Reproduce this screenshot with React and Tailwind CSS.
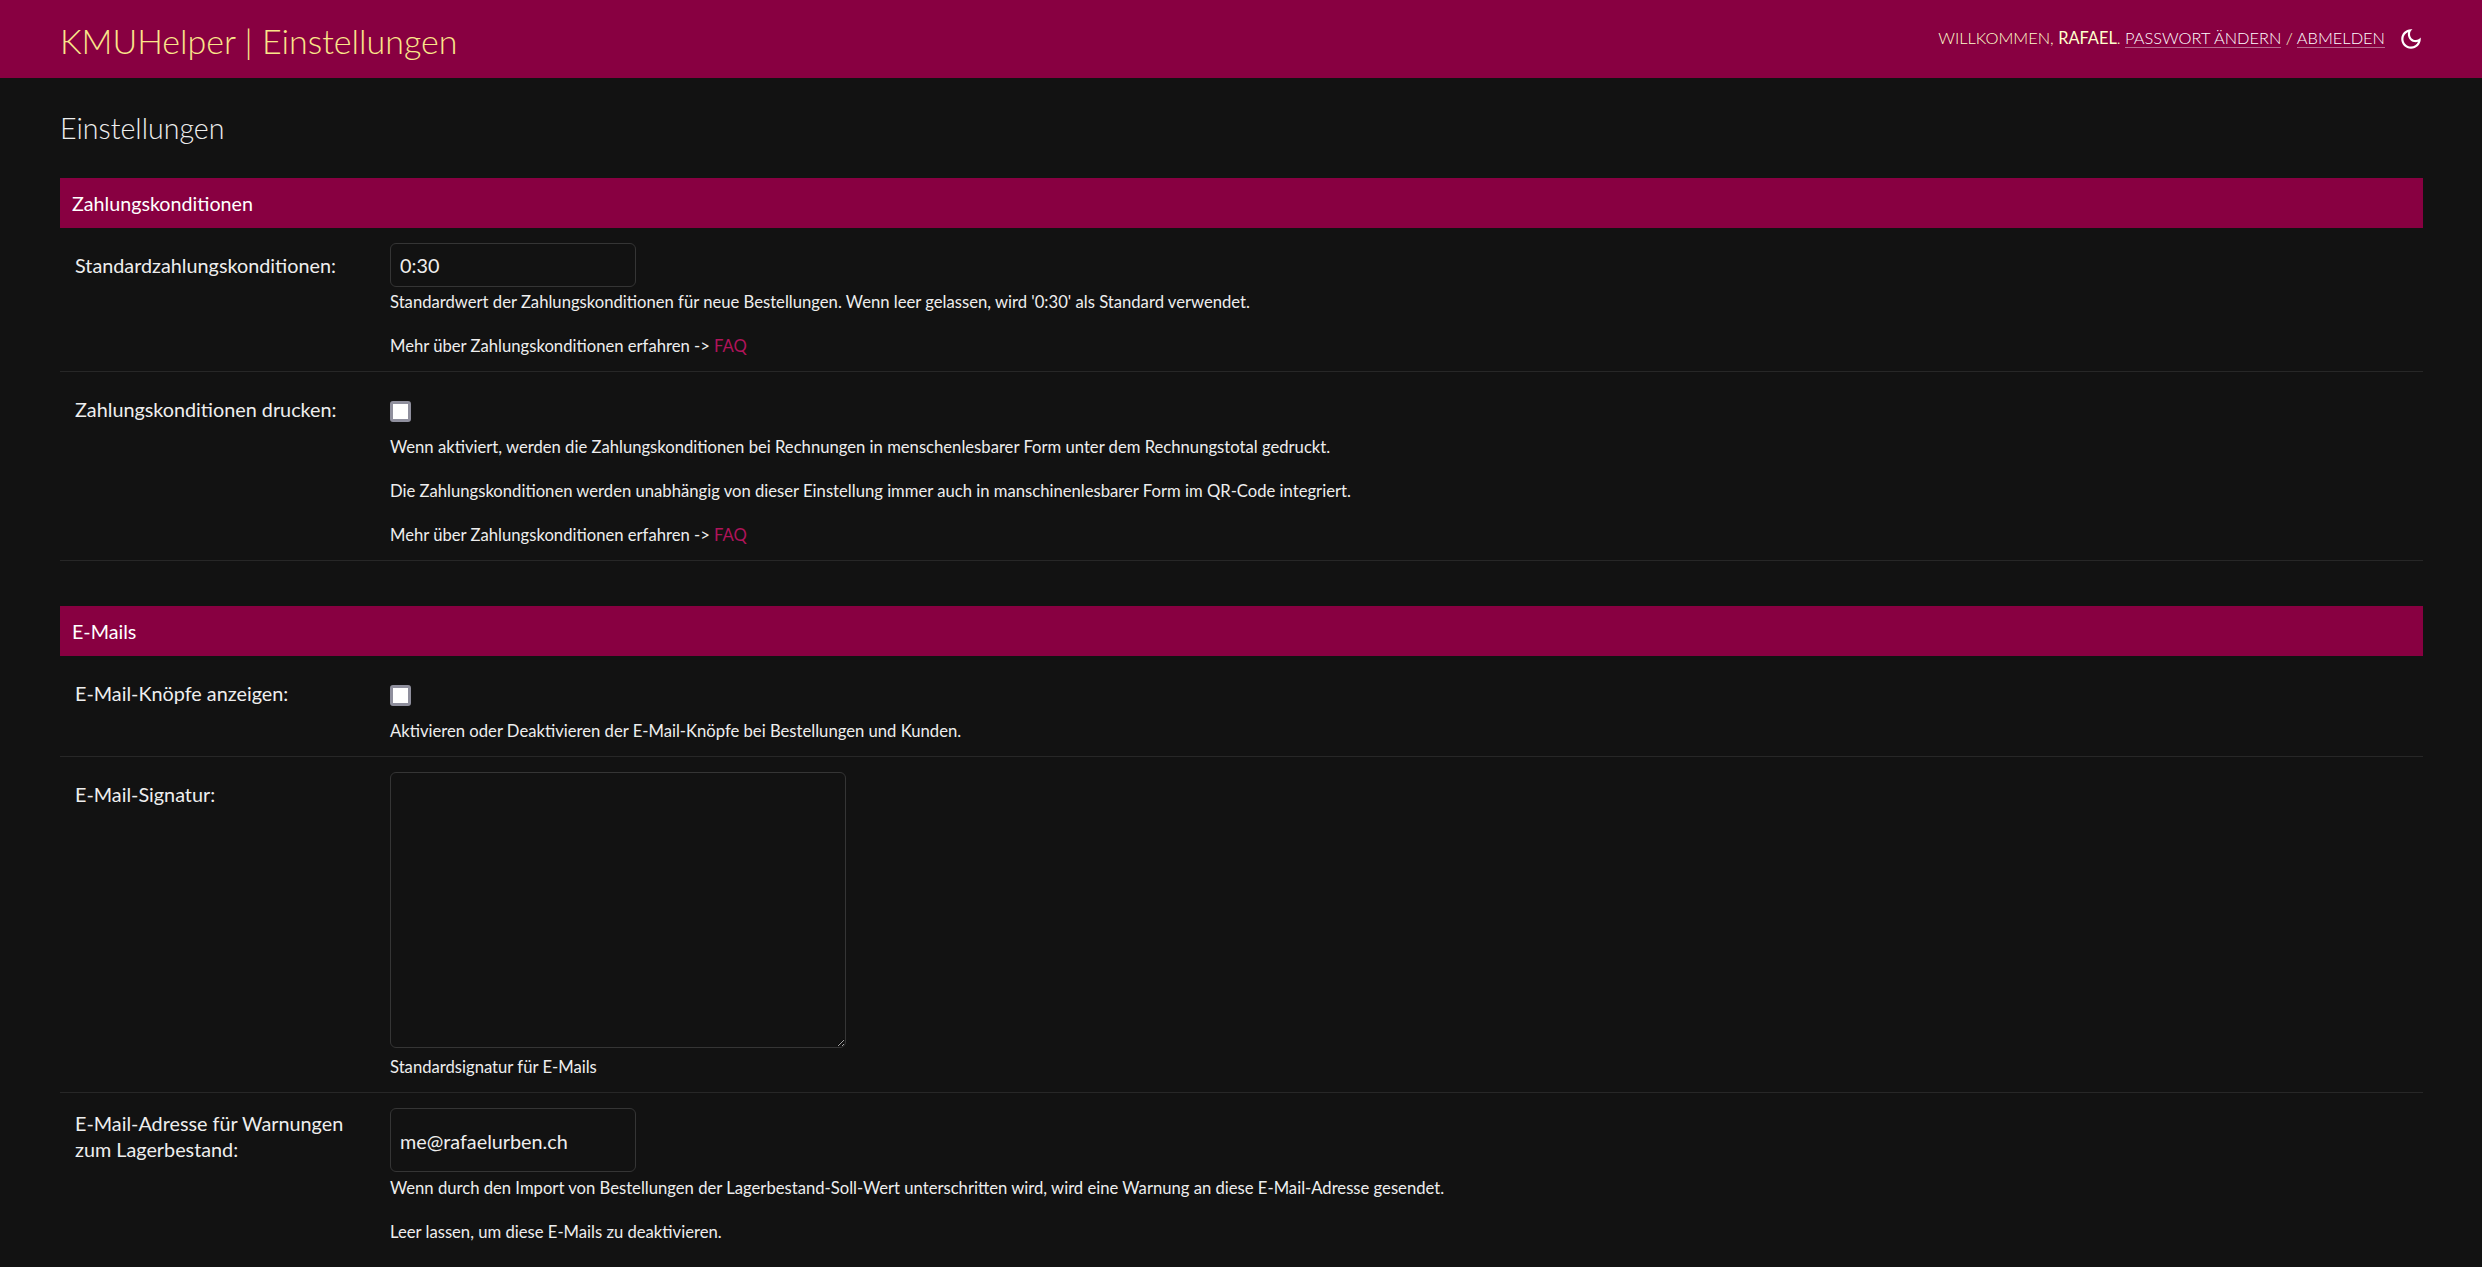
import React from "react";

function Row({ label, children, labelClass = "pt-[9px]", last = false }) {
  return (
    <div className={`flex pt-[15px] pb-[14px] pl-[15px] ${last ? "" : "border-b border-[#272727]"}`}>
      <label className={`w-[315px] shrink-0 text-[19.8px] leading-[26px] text-[#eeeeee] ${labelClass}`}>{label}</label>
      <div className="flex-1">{children}</div>
    </div>
  );
}

function Help({ children }) {
  return <p className="text-[16.65px] leading-[22px] text-[#eeeeee]">{children}</p>;
}

function Faq() {
  return (
    <Help>
      Mehr über Zahlungskonditionen erfahren -&gt; <a href="#" className="text-[#b0145a]">FAQ</a>
    </Help>
  );
}

function Check() {
  return (
    <div className="pt-[14px] pb-[14px] h-[49px]">
      <input type="checkbox" className="block w-[21px] h-[21px] m-0 appearance-none bg-white border-[3px] border-[#8f8f9d] rounded-[3px]" />
    </div>
  );
}

function Section({ title, children }) {
  return (
    <section>
      <h2 className="bg-[#880041] text-white text-[19.7px] leading-[52px] h-[50px] pl-[12px]">{title}</h2>
      {children}
    </section>
  );
}

export default function App() {
  return (
    <div className="h-screen overflow-hidden bg-[#121212] text-[#eeeeee] font-['Lato',sans-serif]">
      <header className="h-[78px] bg-[#880041] flex items-center justify-between pl-[60px] pr-[58px]">
        <h1 className="text-[34px] font-light text-[#fbe68a] pt-[2px]">KMUHelper | Einstellungen</h1>
        <div className="flex items-center gap-[13px]">
          <div className="text-[16.4px] font-light uppercase text-[#ffffcc] pb-[2px]">
            Willkommen, <strong className="font-normal">Rafael</strong>.{" "}
            <a href="#" className="text-white border-b border-white/40">Passwort ändern</a>
            {" / "}
            <a href="#" className="text-white border-b border-white/40">Abmelden</a>
          </div>
          <svg viewBox="0 0 24 24" className="w-[26px] h-[26px] fill-white">
            <path d="M9.37 5.51c-.18.64-.27 1.31-.27 1.99 0 4.08 3.32 7.4 7.4 7.4.68 0 1.35-.09 1.99-.27C17.45 17.19 14.93 19 12 19c-3.86 0-7-3.14-7-7 0-2.93 1.81-5.45 4.37-6.49zM12 3c-4.97 0-9 4.03-9 9s4.03 9 9 9 9-4.03 9-9c0-.46-.04-.92-.1-1.36-.98 1.37-2.58 2.26-4.4 2.26-2.98 0-5.4-2.42-5.4-5.4 0-1.81.89-3.42 2.26-4.4-.44-.06-.9-.1-1.36-.1z" />
          </svg>
        </div>
      </header>

      <main className="pr-[59px] pl-[60px]">
        <h1 className="text-[28.6px] font-light leading-[40px] pt-[30px] pb-[30px] box-content">Einstellungen</h1>

        <Section title="Zahlungskonditionen">
          <Row label="Standardzahlungskonditionen:">
            <input defaultValue="0:30" className="block w-[246px] h-[44px] px-[9px] bg-[#121212] border border-[#353535] rounded-[6px] text-[19.8px] outline-none" />
            <div className="mt-[4px] flex flex-col gap-[22px]">
              <Help>Standardwert der Zahlungskonditionen für neue Bestellungen. Wenn leer gelassen, wird '0:30' als Standard verwendet.</Help>
              <Faq />
            </div>
          </Row>
          <Row label="Zahlungskonditionen drucken:">
            <Check />
            <div className="flex flex-col gap-[22px]">
              <Help>Wenn aktiviert, werden die Zahlungskonditionen bei Rechnungen in menschenlesbarer Form unter dem Rechnungstotal gedruckt.</Help>
              <Help>Die Zahlungskonditionen werden unabhängig von dieser Einstellung immer auch in manschinenlesbarer Form im QR-Code integriert.</Help>
              <Faq />
            </div>
          </Row>
        </Section>

        <div className="mt-[45px]">
          <Section title="E-Mails">
            <Row label="E-Mail-Knöpfe anzeigen:">
              <Check />
              <Help>Aktivieren oder Deaktivieren der E-Mail-Knöpfe bei Bestellungen und Kunden.</Help>
            </Row>
            <Row label="E-Mail-Signatur:">
              <textarea className="block w-[456px] h-[276px] bg-[#121212] border border-[#353535] rounded-[6px] outline-none" />
              <div className="mt-[8px]">
                <Help>Standardsignatur für E-Mails</Help>
              </div>
            </Row>
            <Row last label={<>E-Mail-Adresse für Warnungen<br />zum Lagerbestand:</>} labelClass="pt-[2px]">
              <input defaultValue="me@rafaelurben.ch" className="block w-[246px] h-[64px] px-[9px] pt-[2px] bg-[#121212] border border-[#353535] rounded-[6px] text-[19.8px] outline-none" />
              <div className="mt-[5px] flex flex-col gap-[22px]">
                <Help>Wenn durch den Import von Bestellungen der Lagerbestand-Soll-Wert unterschritten wird, wird eine Warnung an diese E-Mail-Adresse gesendet.</Help>
                <Help>Leer lassen, um diese E-Mails zu deaktivieren.</Help>
              </div>
            </Row>
          </Section>
        </div>
      </main>
    </div>
  );
}
